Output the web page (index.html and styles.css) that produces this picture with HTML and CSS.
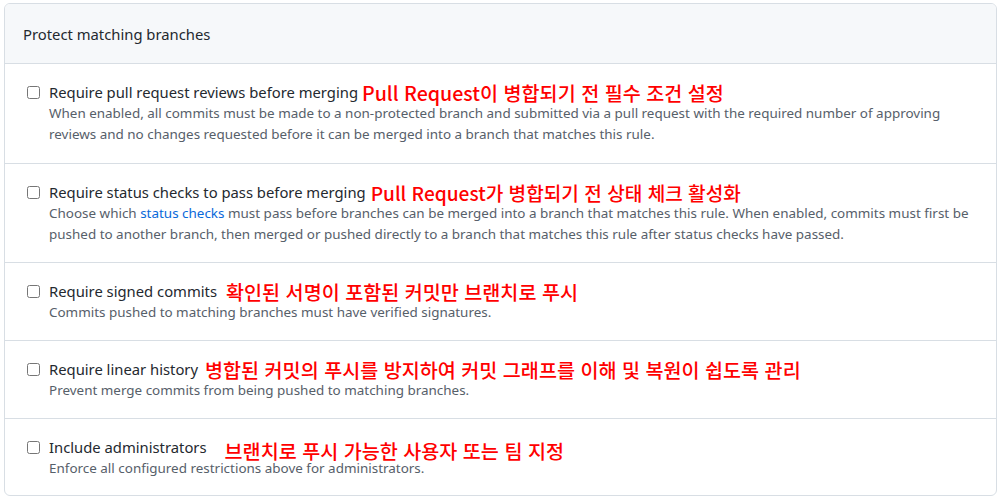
FILE: index.html
```html
<!DOCTYPE html>
<html lang="ko">
<head>
<meta charset="utf-8">
<link rel="stylesheet" href="styles.css">
</head>
<body>
<div class="box">
  <div class="box-header">Protect matching branches</div>
  <div class="row row-tall">
    <label class="label"><input type="checkbox" class="check"><span class="title">Require pull request reviews before merging</span><span class="note note-1">Pull Request이 병합되기 전 필수 조건 설정</span></label>
    <p class="desc">When enabled, all commits must be made to a non-protected branch and submitted via a pull request with the required number of approving reviews and no changes requested before it can be merged into a branch that matches this rule.</p>
  </div>
  <div class="row row-tall">
    <label class="label"><input type="checkbox" class="check"><span class="title">Require status checks to pass before merging</span><span class="note note-2">Pull Request가 병합되기 전 상태 체크 활성화</span></label>
    <p class="desc">Choose which <a class="link" href="#">status checks</a> must pass before branches can be merged into a branch that matches this rule. When enabled, commits must first be pushed to another branch, then merged or pushed directly to a branch that matches this rule after status checks have passed.</p>
  </div>
  <div class="row">
    <label class="label"><input type="checkbox" class="check"><span class="title">Require signed commits</span><span class="note note-3">확인된 서명이 포함된 커밋만 브랜치로 푸시</span></label>
    <p class="desc">Commits pushed to matching branches must have verified signatures.</p>
  </div>
  <div class="row">
    <label class="label"><input type="checkbox" class="check"><span class="title">Require linear history</span><span class="note note-4">병합된 커밋의 푸시를 방지하여 커밋 그래프를 이해 및 복원이 쉽도록 관리</span></label>
    <p class="desc">Prevent merge commits from being pushed to matching branches.</p>
  </div>
  <div class="row">
    <label class="label"><input type="checkbox" class="check"><span class="title">Include administrators</span><span class="note note-5">브랜치로 푸시 가능한 사용자 또는 팀 지정</span></label>
    <p class="desc">Enforce all configured restrictions above for administrators.</p>
  </div>
</div>
</body>
</html>
```
FILE: styles.css
```css
* { box-sizing: border-box; }
html, body { margin: 0; padding: 0; background: #ffffff; }
body {
  padding: 3px 7px 0 4px;
  font-family: "Noto Sans", "Noto Sans CJK KR", sans-serif;
  color: #24292f;
}
.box {
  border: 1px solid #d8dee4;
  border-radius: 6px;
  overflow: hidden;
  height: 493px;
}
.box-header {
  background: #f6f8fa;
  border-bottom: 1px solid #d8dee4;
  height: 60px;
  padding: 0 18px;
  display: flex;
  align-items: center;
  font-size: 14.8px;
  color: #24292f;
}
.row {
  border-top: 1px solid #d8dee4;
  height: 78px;
  padding: 17px 18px 0 22px;
}
.box-header + .row { border-top: none; }
.row-tall { height: 99px; }
.label {
  display: flex;
  align-items: center;
  height: 22px;
  font-size: 14.8px;
  white-space: nowrap;
}
.check {
  margin: 0 9px 0 0;
  width: 13px;
  height: 13px;
  flex: none;
}
.title { color: #24292f; }
.note {
  font-family: "Noto Sans CJK KR", sans-serif;
  font-size: 19.6px;
  line-height: 22px;
  font-weight: 500;
  color: #ff0000;
  position: relative;
  top: 1px;
  margin-left: 4px;
}
.note-2 { margin-left: 5px; font-size: 19.1px; }
.note-3 { margin-left: 9px; }
.note-4 { margin-left: 7px; }
.note-5 { margin-left: 18px; top: 4px; }
.desc {
  margin: 0 0 0 22px;
  font-size: 13.45px;
  line-height: 21px;
  color: #57606a;
}
.link { color: #0969da; text-decoration: none; }
```
